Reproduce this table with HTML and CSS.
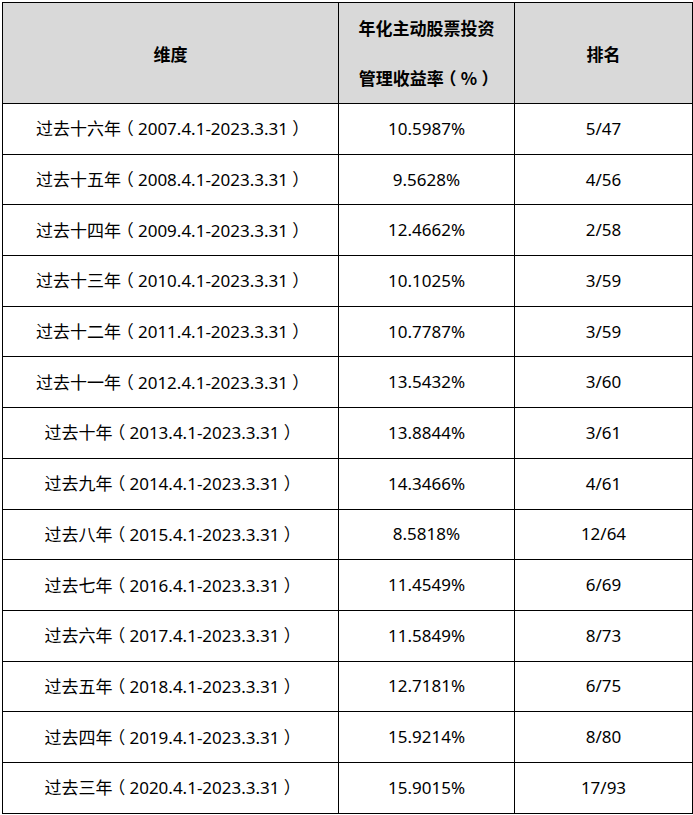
FILE: index.html
```html
<!DOCTYPE html>
<html lang="zh-CN">
<head>
<meta charset="utf-8">
<title>业绩</title>
<link rel="stylesheet" href="styles.css">
</head>
<body>
<table class="perf">
  <colgroup>
    <col class="c1"><col class="c2"><col class="c3">
  </colgroup>
  <thead>
    <tr class="head">
      <th>维度</th>
      <th class="two">年化主动股票投资<br>管理收益率<span class="p">（</span>%<span class="p">）</span></th>
      <th>排名</th>
    </tr>
  </thead>
  <tbody>
    <tr><td>过去十六年<span class="p">（</span>2007.4.1-2023.3.31<span class="p">）</span></td><td>10.5987%</td><td>5/47</td></tr>
    <tr><td>过去十五年<span class="p">（</span>2008.4.1-2023.3.31<span class="p">）</span></td><td>9.5628%</td><td>4/56</td></tr>
    <tr><td>过去十四年<span class="p">（</span>2009.4.1-2023.3.31<span class="p">）</span></td><td>12.4662%</td><td>2/58</td></tr>
    <tr><td>过去十三年<span class="p">（</span>2010.4.1-2023.3.31<span class="p">）</span></td><td>10.1025%</td><td>3/59</td></tr>
    <tr><td>过去十二年<span class="p">（</span>2011.4.1-2023.3.31<span class="p">）</span></td><td>10.7787%</td><td>3/59</td></tr>
    <tr><td>过去十一年<span class="p">（</span>2012.4.1-2023.3.31<span class="p">）</span></td><td>13.5432%</td><td>3/60</td></tr>
    <tr><td>过去十年<span class="p">（</span>2013.4.1-2023.3.31<span class="p">）</span></td><td>13.8844%</td><td>3/61</td></tr>
    <tr><td>过去九年<span class="p">（</span>2014.4.1-2023.3.31<span class="p">）</span></td><td>14.3466%</td><td>4/61</td></tr>
    <tr><td>过去八年<span class="p">（</span>2015.4.1-2023.3.31<span class="p">）</span></td><td>8.5818%</td><td>12/64</td></tr>
    <tr><td>过去七年<span class="p">（</span>2016.4.1-2023.3.31<span class="p">）</span></td><td>11.4549%</td><td>6/69</td></tr>
    <tr><td>过去六年<span class="p">（</span>2017.4.1-2023.3.31<span class="p">）</span></td><td>11.5849%</td><td>8/73</td></tr>
    <tr><td>过去五年<span class="p">（</span>2018.4.1-2023.3.31<span class="p">）</span></td><td>12.7181%</td><td>6/75</td></tr>
    <tr><td>过去四年<span class="p">（</span>2019.4.1-2023.3.31<span class="p">）</span></td><td>15.9214%</td><td>8/80</td></tr>
    <tr><td>过去三年<span class="p">（</span>2020.4.1-2023.3.31<span class="p">）</span></td><td>15.9015%</td><td>17/93</td></tr>
  </tbody>
</table>
</body>
</html>
```

FILE: styles.css
```css
html, body {
  margin: 0;
  padding: 0;
  background: #ffffff;
}
body {
  padding: 2px 0 0 2px;
  font-family: "Noto Sans", "Noto Sans CJK SC", sans-serif;
  color: #000000;
}
.perf {
  border-collapse: collapse;
  table-layout: fixed;
  width: 690px;
}
.c1 { width: 336px; }
.c2 { width: 176px; }
.c3 { width: 178px; }
.perf th, .perf td {
  border: 1px solid #000000;
  text-align: center;
  vertical-align: middle;
  padding: 0;
  font-size: 17px;
}
.perf th {
  background: #d9d9d9;
  font-weight: bold;
  font-family: "Noto Sans CJK SC", sans-serif;
  height: 99px;
}
.perf th.two {
  line-height: 50px;
}
.perf td {
  height: 49.7px;
  line-height: 20px;
}
.p {
  font-family: "Noto Sans CJK SC", sans-serif;
  font-feature-settings: "halt";
  padding: 0 0.25em;
}
```
